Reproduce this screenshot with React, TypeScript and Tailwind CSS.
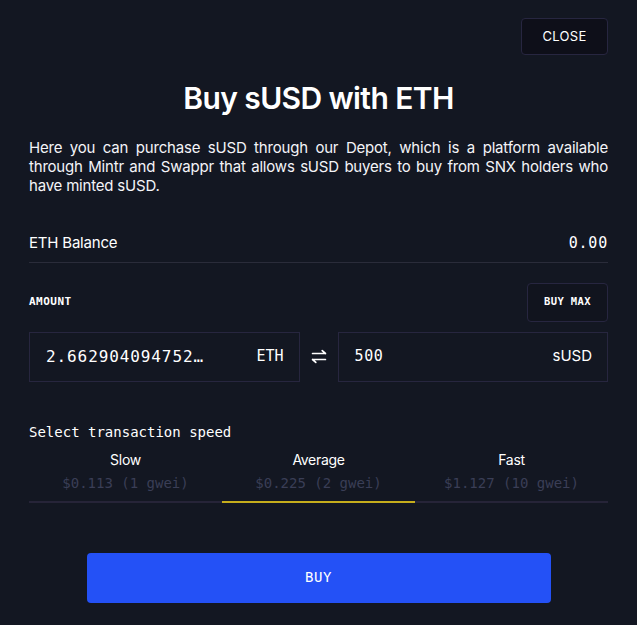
export default function App() {
  const sans = { fontFamily: "Inter, 'Noto Sans', sans-serif" };
  const mono = { fontFamily: "'DejaVu Sans Mono', 'Liberation Mono', monospace" };
  const speeds = [
    { label: "Slow", price: "$0.113 (1 gwei)", active: false },
    { label: "Average", price: "$0.225 (2 gwei)", active: true },
    { label: "Fast", price: "$1.127 (10 gwei)", active: false },
  ];

  return (
    <div className="w-[637px] h-[625px] bg-[#131722] text-white px-[29px] flex flex-col" style={sans}>
      {/* Header */}
      <div className="flex justify-end pt-[18px]">
        <button className="w-[87px] h-[37px] rounded-[4px] border border-[#272640] bg-[#0e0f19] text-[13px] tracking-[0.3px] text-white">
          CLOSE
        </button>
      </div>

      <h1 className="text-center text-[30px] font-semibold tracking-[-0.6px] leading-none mt-[28px]">
        Buy sUSD with ETH
      </h1>

      <p className="mt-[25px] text-[15px] leading-[19px] tracking-[-0.2px] text-justify text-[#f4f4f8]">
        Here you can purchase sUSD through our Depot, which is a platform available through Mintr and Swappr that allows sUSD buyers to buy from SNX holders who have minted sUSD.
      </p>

      {/* Balance */}
      <div className="mt-[37px] flex justify-between items-center pb-[7px] border-b border-[#2a2c3a]">
        <span className="text-[15px] tracking-[-0.2px]">ETH Balance</span>
        <span className="text-[15px] tracking-[0.8px]" style={mono}>0.00</span>
      </div>

      {/* Amount */}
      <div className="mt-[20px] flex justify-between items-center">
        <span className="text-[11px] font-bold tracking-[0.5px]" style={mono}>AMOUNT</span>
        <button className="w-[81px] h-[39px] rounded-[4px] border border-[#272640] bg-[#11141e] text-[10.5px] font-bold tracking-[0.4px]" style={mono}>
          BUY MAX
        </button>
      </div>

      <div className="mt-[10px] flex items-center gap-[11px]">
        <div className="flex-1 h-[50px] border border-[#27263f] flex items-center justify-between pl-[16px] pr-[15px]">
          <span className="text-[16px] tracking-[0.9px] w-[162px] whitespace-nowrap overflow-hidden text-ellipsis" style={mono}>2.662904094752…</span>
          <span className="text-[15px]" style={mono}>ETH</span>
        </div>
        <svg width="16" height="15" viewBox="0 0 14 14" fill="none" stroke="white" strokeWidth="1.6" strokeLinecap="round" strokeLinejoin="round">
          <path d="M1 4.2h12M10 1.5l3 2.7" />
          <path d="M13 9.8H1M4 12.5L1 9.8" />
        </svg>
        <div className="flex-1 h-[50px] border border-[#27263f] flex items-center justify-between pl-[16px] pr-[15px]">
          <span className="text-[15px] tracking-[0.6px]" style={mono}>500</span>
          <span className="text-[15px]" style={sans}>sUSD</span>
        </div>
      </div>

      {/* Speed */}
      <div className="mt-[40px] text-[14px]" style={mono}>Select transaction speed</div>
      <div className="mt-[6px] grid grid-cols-3">
        {speeds.map((s) => (
          <div
            key={s.label}
            className={`flex flex-col items-center pb-[7px] border-b-2 ${s.active ? "border-[#c5ad1c]" : "border-[#262438]"}`}
          >
            <span className="text-[14px] tracking-[-0.3px]">{s.label}</span>
            <span className="mt-[3px] text-[14px] text-[#3a3e56]" style={mono}>{s.price}</span>
          </div>
        ))}
      </div>

      <div className="flex justify-center mt-[50px]">
        <button className="w-[464px] h-[50px] rounded-[4px] bg-[#2451f6] text-[14px] tracking-[0.5px]" style={mono}>
          BUY
        </button>
      </div>
    </div>
  );
}
